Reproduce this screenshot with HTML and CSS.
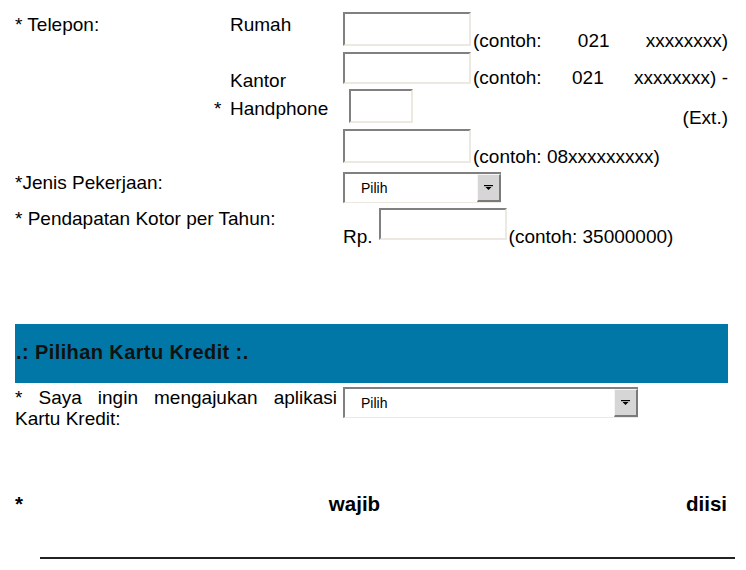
FILE: index.html
```html
<!DOCTYPE html>
<html lang="id">
<head>
<meta charset="utf-8">
<title>Formulir Aplikasi</title>
<link rel="stylesheet" href="styles.css">
</head>
<body>
<div class="page">
  <div class="row">
    <div class="lbl">* Telepon:</div>
    <div class="sub">Rumah<br>&nbsp;<br>Kantor<br><span class="hang">*</span>Handphone</div>
    <div class="fields">
      <div class="fline">
        <span class="unit"><input class="inp" type="text" aria-label="Rumah"><span class="txt">(contoh:</span></span>
        <span class="txt">021</span>
        <span class="txt">xxxxxxxx)</span>
      </div>
      <div class="fline">
        <span class="unit"><input class="inp inp-b" type="text" aria-label="Kantor"><span class="txt">(contoh:</span></span>
        <span class="txt">021</span>
        <span class="txt">xxxxxxxx)&nbsp;-</span>
      </div>
      <div class="fline">
        <input class="inp inp-ext" type="text" aria-label="Ext">
        <span class="txt">(Ext.)</span>
      </div>
      <div class="fline fline-left">
        <span class="unit"><input class="inp" type="text" aria-label="Handphone"><span class="txt">(contoh: 08xxxxxxxxx)</span></span>
      </div>
    </div>
  </div>

  <div class="row row-job">
    <div class="lbl-wide">*Jenis Pekerjaan:</div>
    <div class="sel">
      <span class="sel-val">Pilih</span>
      <span class="sel-btn"><svg width="9" height="5" viewBox="0 0 9 5"><rect x="0" y="0" width="9" height="1.2" fill="#000"/><polygon points="1.5,2 7.5,2 4.5,5" fill="#000"/></svg></span>
    </div>
  </div>

  <div class="row row-inc">
    <div class="lbl-wide lbl-inc">* Pendapatan Kotor per Tahun:</div>
    <div class="rp">
      <span class="txt">Rp.</span>
      <input class="inp inp-rp" type="text" aria-label="Pendapatan">
      <span class="txt">(contoh: 35000000)</span>
    </div>
  </div>

  <div class="bar">.: Pilihan Kartu Kredit :.</div>

  <div class="row row-apply">
    <div class="lbl-apply">
      <div class="just">* Saya ingin mengajukan aplikasi</div>
      <div>Kartu Kredit:</div>
    </div>
    <div class="sel sel-wide">
      <span class="sel-val">Pilih</span>
      <span class="sel-btn"><svg width="9" height="5" viewBox="0 0 9 5"><rect x="0" y="0" width="9" height="1.2" fill="#000"/><polygon points="1.5,2 7.5,2 4.5,5" fill="#000"/></svg></span>
    </div>
  </div>

  <div class="req">* wajib diisi</div>
  <hr class="rule">
</div>
</body>
</html>
```
FILE: styles.css
```css
html, body {
  margin: 0;
  padding: 0;
  background: #fff;
}
body {
  font-family: "Liberation Sans", Arial, sans-serif;
  font-size: 19px;
  color: #000;
}
.page {
  padding: 11px 0 0 15px;
  width: 713px;
}
.row {
  display: flex;
  align-items: flex-start;
}
.lbl {
  width: 215px;
  line-height: 28px;
}
.sub {
  width: 113px;
  line-height: 28px;
}
.hang {
  display: inline-block;
  width: 16px;
  margin-left: -16px;
}
.fields {
  width: 385px;
}
.fline {
  display: flex;
  justify-content: space-between;
  align-items: flex-end;
  margin-top: 1px;
}
.fline-left {
  justify-content: flex-start;
}
.unit {
  display: flex;
  align-items: flex-end;
}
.unit .inp {
  margin-right: 2px;
}
.txt {
  line-height: 20px;
  white-space: nowrap;
}
.inp {
  display: block;
  box-sizing: border-box;
  width: 128px;
  height: 34px;
  margin: 0 0 4.5px 0;
  padding: 0;
  border: 2px solid;
  border-color: #808080 #ebe9e0 #ebe9e0 #808080;
  background: #fff;
}
.inp-b {
  height: 32px;
}
.inp-ext {
  width: 64px;
  margin-left: 6px;
}
.row-job {
  margin-top: 5px;
}
.lbl-wide {
  width: 328px;
  line-height: 22px;
}
.lbl-inc {
  padding-top: 3px;
}
.sel {
  box-sizing: border-box;
  display: flex;
  width: 158px;
  height: 31px;
  border-top: 2px solid #808080;
  border-left: 2px solid #808080;
  border-bottom: 1px solid #ebe9e0;
  background: #fff;
}
.sel-wide {
  width: 295px;
}
.sel-val {
  flex: 1;
  display: flex;
  align-items: center;
  padding-left: 16px;
  font-size: 14px;
}
.sel-btn {
  box-sizing: border-box;
  width: 24px;
  display: flex;
  align-items: center;
  justify-content: center;
  background: #d6d6d6;
  border-top: 1px solid #f5f5f5;
  border-left: 1px solid #f5f5f5;
  border-right: 2px solid #7a7a7a;
  border-bottom: 2px solid #7a7a7a;
}
.row-inc {
  margin-top: 2px;
}
.rp {
  display: flex;
  align-items: flex-end;
}
.inp-rp {
  height: 32px;
  margin-top: 3px;
  margin-bottom: 6.5px;
  margin-left: 6px;
  margin-right: 2px;
}
.bar {
  margin-top: 77.5px;
  height: 59px;
  background: #0077a6;
  color: #111;
  font-weight: bold;
  font-size: 20px;
  line-height: 57px;
  letter-spacing: 0.4px;
  padding-left: 1px;
}
.row-apply {
  margin-top: 4px;
}
.lbl-apply {
  width: 322px;
  margin-right: 6px;
  line-height: 21px;
}
.just {
  text-align: justify;
  text-align-last: justify;
}
.req {
  margin-top: 63px;
  width: 712px;
  font-weight: bold;
  font-size: 20.5px;
  line-height: 24px;
  text-align: justify;
  text-align-last: justify;
}
.rule {
  margin: 41px 0 0 25px;
  width: 695px;
  height: 2px;
  border: 0;
  background: #222;
}
```
